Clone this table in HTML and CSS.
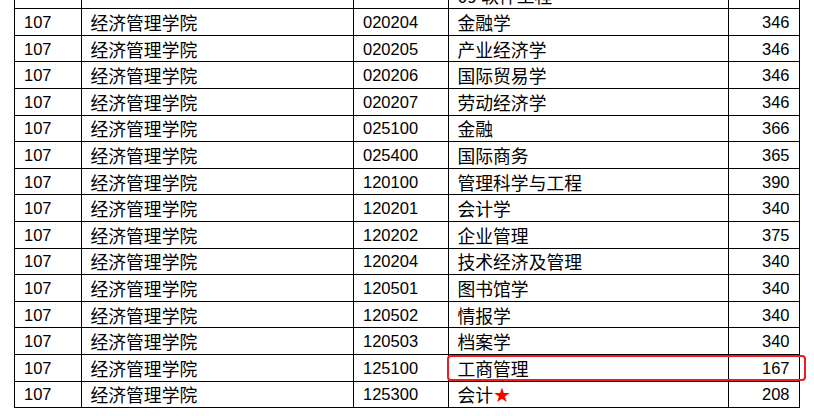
FILE: index.html
```html
<!DOCTYPE html>
<html lang="zh-CN">
<head>
<meta charset="utf-8">
<title>经济管理学院</title>
<link rel="stylesheet" href="styles.css">
</head>
<body>
<div class="sheet">
  <table class="grid">
    <colgroup>
      <col class="c1"><col class="c2"><col class="c3"><col class="c4"><col class="c5">
    </colgroup>
    <tbody>
      <tr><td class="num"></td><td class="zh"></td><td class="num"></td><td class="zh">09 软件工程</td><td class="num r"></td></tr>
      <tr><td class="num">107</td><td class="zh">经济管理学院</td><td class="num">020204</td><td class="zh">金融学</td><td class="num r">346</td></tr>
      <tr><td class="num">107</td><td class="zh">经济管理学院</td><td class="num">020205</td><td class="zh">产业经济学</td><td class="num r">346</td></tr>
      <tr><td class="num">107</td><td class="zh">经济管理学院</td><td class="num">020206</td><td class="zh">国际贸易学</td><td class="num r">346</td></tr>
      <tr><td class="num">107</td><td class="zh">经济管理学院</td><td class="num">020207</td><td class="zh">劳动经济学</td><td class="num r">346</td></tr>
      <tr><td class="num">107</td><td class="zh">经济管理学院</td><td class="num">025100</td><td class="zh">金融</td><td class="num r">366</td></tr>
      <tr><td class="num">107</td><td class="zh">经济管理学院</td><td class="num">025400</td><td class="zh">国际商务</td><td class="num r">365</td></tr>
      <tr><td class="num">107</td><td class="zh">经济管理学院</td><td class="num">120100</td><td class="zh">管理科学与工程</td><td class="num r">390</td></tr>
      <tr><td class="num">107</td><td class="zh">经济管理学院</td><td class="num">120201</td><td class="zh">会计学</td><td class="num r">340</td></tr>
      <tr><td class="num">107</td><td class="zh">经济管理学院</td><td class="num">120202</td><td class="zh">企业管理</td><td class="num r">375</td></tr>
      <tr><td class="num">107</td><td class="zh">经济管理学院</td><td class="num">120204</td><td class="zh">技术经济及管理</td><td class="num r">340</td></tr>
      <tr><td class="num">107</td><td class="zh">经济管理学院</td><td class="num">120501</td><td class="zh">图书馆学</td><td class="num r">340</td></tr>
      <tr><td class="num">107</td><td class="zh">经济管理学院</td><td class="num">120502</td><td class="zh">情报学</td><td class="num r">340</td></tr>
      <tr><td class="num">107</td><td class="zh">经济管理学院</td><td class="num">120503</td><td class="zh">档案学</td><td class="num r">340</td></tr>
      <tr><td class="num">107</td><td class="zh">经济管理学院</td><td class="num">125100</td><td class="zh">工商管理</td><td class="num r">167</td></tr>
      <tr><td class="num">107</td><td class="zh">经济管理学院</td><td class="num">125300</td><td class="zh">会计<span class="star">★</span></td><td class="num r">208</td></tr>
    </tbody>
  </table>
  <div class="mark"></div>
</div>
</body>
</html>
```
FILE: styles.css
```css
html, body {
  margin: 0;
  padding: 0;
  background: #ffffff;
}
body {
  width: 814px;
  height: 416px;
  overflow: hidden;
}
.sheet {
  position: relative;
  width: 814px;
  height: 416px;
  overflow: hidden;
}
.grid {
  border-collapse: collapse;
  table-layout: fixed;
  width: 785px;
  margin-left: 14px;
  margin-top: -18.4px;
  color: #000;
}
.c1 { width: 66.5px; }
.c2 { width: 272.5px; }
.c3 { width: 94.5px; }
.c4 { width: 280px; }
.c5 { width: 71px; }
.grid td {
  border: 1px solid #000;
  height: 26.6px;
  box-sizing: border-box;
  padding: 0 9px;
  vertical-align: middle;
  white-space: nowrap;
  overflow: hidden;
  line-height: 20px;
}
.num {
  font-family: "Liberation Sans", "Noto Sans CJK SC", sans-serif;
  font-size: 16.5px;
}
.zh {
  font-family: "Noto Sans CJK SC", "Liberation Sans", sans-serif;
  font-size: 17.8px;
}
.r {
  text-align: right;
}
.star {
  color: #ff0000;
  font-family: "DejaVu Sans", sans-serif;
  font-size: 20px;
  line-height: 18px;
}
.mark {
  position: absolute;
  left: 447px;
  top: 355px;
  width: 359px;
  height: 26px;
  box-sizing: border-box;
  border: 2px solid #f01a1f;
  border-radius: 4px;
}
```
